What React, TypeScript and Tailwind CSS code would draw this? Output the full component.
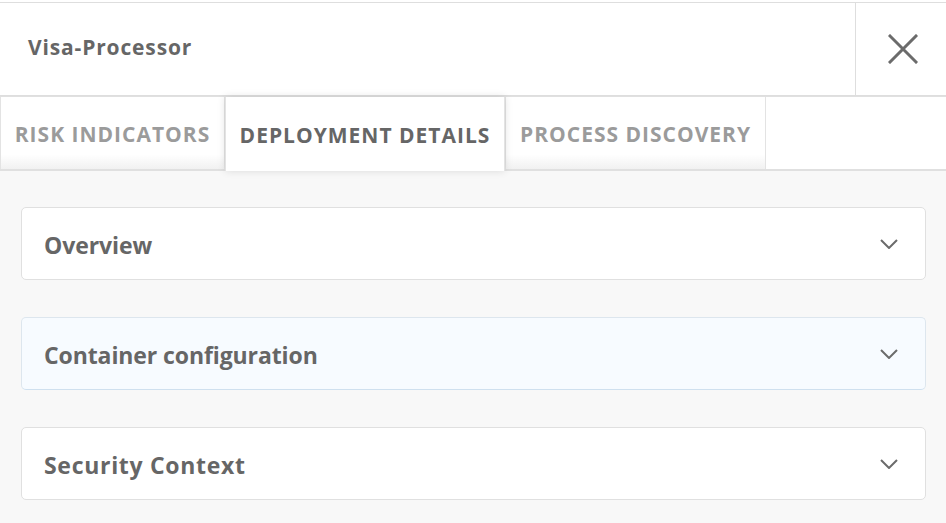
const tabs = [
    { label: 'RISK INDICATORS', active: false, width: 'w-[225px]' },
    { label: 'DEPLOYMENT DETAILS', active: true, width: 'w-[280px]' },
    { label: 'PROCESS DISCOVERY', active: false, width: 'w-[261px]' },
];

const sections = [
    { title: 'Overview', highlight: false, tracking: 'tracking-[-0.1px]' },
    { title: 'Container configuration', highlight: true, tracking: 'tracking-[-0.1px]' },
    { title: 'Security Context', highlight: false, tracking: 'tracking-[0.7px]' },
];

export default function App() {
    return (
        <div className="w-[946px] h-[523px] overflow-hidden bg-white pt-[2px] font-['Open_Sans',sans-serif] text-[#666]">
            <header className="flex h-[94px] border-y border-[#dedede]">
                <h1 className="flex-1 flex items-center pl-[28px] pb-[2px] text-[21px] font-bold tracking-[0.85px]">
                    Visa-Processor
                </h1>
                <button className="w-[91px] flex items-center justify-center pl-[4px] border-l border-[#dedede]" aria-label="Close">
                    <svg width="30" height="30" viewBox="0 0 30 30" fill="none" stroke="#6b6b6b" strokeWidth="3" strokeLinecap="square">
                        <path d="M2 2 L28 28 M28 2 L2 28" />
                    </svg>
                </button>
            </header>

            <nav className="flex h-[75px] border-t border-b-2 border-[#e0e0e0] bg-white">
                {tabs.map((tab) => (
                    <div
                        key={tab.label}
                        className={
                            tab.active
                                ? `${tab.width} relative z-10 -mb-[2px] flex items-center justify-center pt-[3px] bg-white border-x border-[#e3e3e3] shadow-[0_0_8px_rgba(0,0,0,0.12)] text-[21px] font-bold tracking-[1px] text-[#666]`
                                : `${tab.width} flex items-center justify-center pt-[3px] border-x border-[#e3e3e3] bg-gradient-to-b from-white from-80% to-[#f1f1f1] text-[21px] font-bold tracking-[1px] text-[#9b9b9b]`
                        }
                    >
                        {tab.label}
                    </div>
                ))}
            </nav>

            <main className="h-full bg-[#f8f8f8] pl-[21px] pr-[20px] pt-[36px] flex flex-col gap-[37px]">
                {sections.map((s) => (
                    <div
                        key={s.title}
                        className={
                            s.highlight
                                ? 'h-[73px] flex items-center justify-between rounded-[5px] border border-[#dde6ee] border-b-[#cfe0ef] bg-[#f7fbff] pl-[22px] pr-[27px]'
                                : 'h-[73px] flex items-center justify-between rounded-[5px] border border-[#e0e0e0] bg-white pl-[22px] pr-[27px]'
                        }
                    >
                        <span className={`pt-[3px] text-[23px] font-bold ${s.tracking}`}>{s.title}</span>
                        <svg width="18" height="10" viewBox="0 0 18 10" fill="none" stroke="#6b6b6b" strokeWidth="2">
                            <path d="M1 1 L9 9 L17 1" />
                        </svg>
                    </div>
                ))}
            </main>
        </div>
    );
}
